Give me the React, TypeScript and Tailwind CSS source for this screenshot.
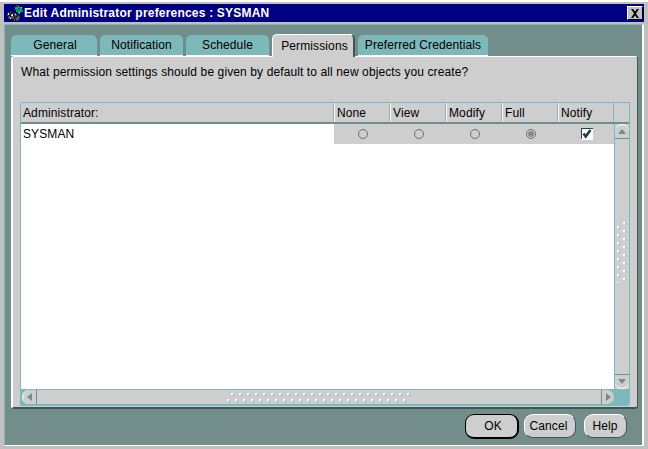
import React from "react";

const tabs = [
  { label: "General", w: "w-[86px]", pad: "pl-[2px]" },
  { label: "Notification", w: "w-[83px]", pad: "" },
  { label: "Schedule", w: "w-[83px]", pad: "" },
  { label: "Permissions", w: "w-[83px]", pad: "pl-[3px]", active: true },
  { label: "Preferred Credentials", w: "w-[130px]", pad: "" },
];

const columns = ["None", "View", "Modify", "Full", "Notify"];

/** Small app icon in the title bar. */
function AppIcon() {
  return (
    <svg width="18" height="17" viewBox="0 0 18 17" className="shrink-0">
      <path d="M3 7h3l1 1h3l2 2h2l1 3-2 3H9L7 14H4L2 11z" fill="#555" />
      <path d="M3 8h2v2H3zM6 9h2v2H6zM5 12h2v2H5zM9 12h2v2H9zM10 9h1v1h-1z" fill="#eee" />
      <path d="M4 7l3 8M8 8l3 8M13 10l-5 5M2 12l6-4" stroke="#000" strokeWidth="1" fill="none" />
      <path d="M12 1h2v1h3v3h1v2h-3v2h-2V7h-2V5h-1V2h2z" fill="#12a040" />
      <path d="M13 3h2v2h-2zM11 0h1v1h-1z" fill="#2448d8" />
      <path d="M16 2h1v1h-1zM14 7h1v1h-1z" fill="#6fe8e8" />
    </svg>
  );
}

function CloseButton() {
  return (
    <div className="w-[16px] h-[14px] bg-[#c0c0c0] border-t border-l border-white border-r border-b border-r-black border-b-black flex items-center justify-center">
      <svg width="10" height="9" viewBox="0 0 10 9">
        <path d="M1 0h2l2 2.500L7 0h2L6 4.500 9 9H7L5 6.500 3 9H1l3-4.500z" fill="#000" />
      </svg>
    </div>
  );
}

function Tab({ label, w, pad, active }: { label: string; w: string; pad: string; active?: boolean }) {
  return (
    <div
      className={`${w} ${pad} rounded-t-[5px] flex items-center justify-center text-black ${
        active
          ? "h-[23px] -mb-[1px] relative z-10 bg-[#cecece] border-t border-l border-white border-r-2 border-r-[#3f5654]"
          : "h-[21px] bg-[#7db8bb] border-b border-b-white"
      }`}
    >
      {label}
    </div>
  );
}

function Radio({ checked }: { checked?: boolean }) {
  return (
    <svg width="12" height="12" viewBox="0 0 12 12">
      <circle cx="6" cy="6" r="4.500" fill="none" stroke="#6f6f6f" strokeWidth="1" />
      {checked && <circle cx="6" cy="6" r="3" fill="#8a8a8a" />}
    </svg>
  );
}

function Check() {
  return (
    <div className="w-[12px] h-[12px] bg-white flex items-center justify-center">
      <svg width="12" height="12" viewBox="0 0 12 12">
        <path d="M0 0h12v1H1v10H0z" fill="#2f4543" />
        <path d="M2.500 5.500l2.200 3 4.800-6.500" fill="none" stroke="#22403d" strokeWidth="2.600" />
      </svg>
    </div>
  );
}

/** Two staggered rows of dots, the drag grip on a scrollbar thumb. */
function Grip({ vertical }: { vertical?: boolean }) {
  const dots = Array.from({ length: 23 }, (_, i) => i);
  if (vertical) {
    return (
      <svg width="9" height="61" viewBox="0 0 9 61">
        {dots.slice(0, 8).map((i) => (
          <g key={i}>
            <rect x="6" y={i * 8} width="2" height="2" fill="#fff" />
            <rect x="8" y={i * 8 + 1} width="1" height="1" fill="#7db8bb" />
            <rect x="0" y={i * 8 + 4} width="2" height="2" fill="#fff" />
            <rect x="2" y={i * 8 + 5} width="1" height="1" fill="#7db8bb" />
          </g>
        ))}
      </svg>
    );
  }
  return (
    <svg width="188" height="9" viewBox="0 0 188 9">
      {dots.map((i) => (
        <g key={i}>
          <rect x={4 + i * 8} y="0" width="2" height="2" fill="#fff" />
          <rect x={6 + i * 8} y="1" width="1" height="2" fill="#7db8bb" />
          <rect x={i * 8} y="6" width="2" height="2" fill="#fff" />
          <rect x={2 + i * 8} y="7" width="1" height="2" fill="#7db8bb" />
        </g>
      ))}
    </svg>
  );
}

function Arrow({ dir }: { dir: "up" | "down" | "left" | "right" }) {
  const pts = {
    up: "0,6 4,1 8,6 ",
    down: "0,1 8,1 4,6",
    left: "6,0 6,8 1,4",
    right: "1,0 1,8 6,4",
  }[dir];
  return (
    <svg width={dir === "up" || dir === "down" ? 8 : 7} height={dir === "up" || dir === "down" ? 7 : 8}>
      <polygon points={pts} fill="#738d8a" />
    </svg>
  );
}

function Button({ label, w, pad, isDefault }: { label: string; w: string; pad: string; isDefault?: boolean }) {
  return (
    <div
      className={`${w} ${pad} flex items-center justify-center bg-[#cecece] text-black rounded-[9px] ${
        isDefault
          ? "h-[25px] border border-black border-r-2 border-b-2"
          : "h-[24px] border-t border-l border-white border-r border-b border-r-[#3f5654] border-b-[#3f5654]"
      }`}
    >
      {label}
    </div>
  );
}

export default function App() {
  return (
    <div className="w-[648px] h-[449px] overflow-hidden bg-[#c0c0c0] border-t-2 border-t-white pt-[2px] pl-[4px] pr-[4px] flex flex-col font-['Liberation_Sans',Arial,sans-serif] text-[12px] leading-none tracking-[0.11px]">
      {/* Title bar */}
      <div className="h-[18px] shrink-0 bg-[#000080] flex items-center pl-[1px] pr-[1px] text-white font-bold">
        <AppIcon />
        <span className="ml-[1px] flex-1 tracking-[0.2px]">Edit Administrator preferences : SYSMAN</span>
        <CloseButton />
      </div>

      <div className="h-[422px] mt-[2px] bg-[#738d8a] border-l border-l-[#7db8bb] border-t border-t-[#7db8bb] border-r-2 border-r-white border-b border-b-white pt-[10px] pl-[6px] pr-[4px] flex flex-col">
        {/* Tabs */}
        <div className="flex items-end gap-[3px] h-[21px] shrink-0">
          {tabs.map((t) => (
            <Tab key={t.label} label={t.label} w={t.w} pad={t.pad} active={t.active} />
          ))}
        </div>

        {/* Panel */}
        <div className="h-[353px] shrink-0 bg-[#cecece] rounded-[3px] border-t border-l-2 border-white border-r border-r-[#3f5654] border-b-2 border-b-[#3f5654] pl-[7px] pr-[6px] pt-[8px] flex flex-col">
          <div className="h-[14px] pl-[1px] text-black flex items-center">
            What permission settings should be given by default to all new objects you create?
          </div>

          <div className="mt-[23px] h-[304px] w-[610px] rounded-tl-[2px] rounded-br-[4px] border border-[#7db8bb] border-b-2 flex flex-col text-black">
            {/* Header row */}
            <div className="h-[21px] shrink-0 flex border-b-2 border-b-[#738d8a]">
              <div className="w-[313px] pl-[2px] flex items-center border-r border-r-[#7db8bb]">Administrator:</div>
              {columns.map((c) => (
                <div key={c} className="w-[56px] pl-[2px] flex items-center border-l border-l-white border-r border-r-[#7db8bb]">
                  {c}
                </div>
              ))}
              <div className="flex-1" />
            </div>

            {/* Body */}
            <div className="flex-1 flex min-h-0">
              <div className="flex-1 flex flex-col bg-white min-w-0">
                <div className="h-[20px] flex shrink-0">
                  <div className="w-[313px] pl-[2px] pb-[1px] flex items-center">SYSMAN</div>
                  <div className="flex-1 bg-[#cecece] flex">
                    {columns.map((c, i) => (
                      <div key={c} className="w-[56px] pl-[2px] pb-[1px] flex items-center justify-center">
                        {i < 4 ? <Radio checked={i === 3} /> : <Check />}
                      </div>
                    ))}
                  </div>
                </div>
              </div>

              {/* Vertical scrollbar */}
              <div className="w-[15px] shrink-0 border-l border-l-[#7db8bb] bg-[#cecece] flex flex-col items-center">
                <div className="h-[15px] w-full shrink-0 rounded-t-[7px] border-t border-white bg-[#cecece] border-b border-b-[#738d8a] flex items-center justify-center">
                  <Arrow dir="up" />
                </div>
                <div className="flex-1 flex items-center justify-center pb-[8px] pr-[1px]">
                  <Grip vertical />
                </div>
                <div className="h-[15px] w-full shrink-0 rounded-b-[7px] border-t border-t-[#738d8a] border-b border-b-white flex items-center justify-center">
                  <Arrow dir="down" />
                </div>
              </div>
            </div>

            {/* Horizontal scrollbar */}
            <div className="h-[15px] shrink-0 flex border-t border-t-[#7db8bb] bg-[#7db8bb]">
              <div className="w-[15px] ml-[1px] shrink-0 rounded-l-[7px] bg-[#cecece] border-l border-l-white border-r border-r-[#738d8a] flex items-center justify-center">
                <Arrow dir="left" />
              </div>
              <div className="w-[564px] bg-[#cecece] flex items-center justify-center pl-[3px]">
                <Grip />
              </div>
              <div className="w-[13px] shrink-0 rounded-r-[7px] bg-[#cecece] border-l border-l-[#738d8a] flex items-center justify-center">
                <Arrow dir="right" />
              </div>
            </div>
          </div>
        </div>

        {/* Dialog buttons */}
        <div className="flex justify-end mt-[5px] pr-[11px]">
          <Button label="OK" w="w-[54px]" pad="pl-[3px]" isDefault />
          <div className="ml-[5px]">
            <Button label="Cancel" w="w-[52px]" pad="pr-[3px]" />
          </div>
          <div className="ml-[8px]">
            <Button label="Help" w="w-[43px]" pad="pr-[1px]" />
          </div>
        </div>
      </div>
    </div>
  );
}
